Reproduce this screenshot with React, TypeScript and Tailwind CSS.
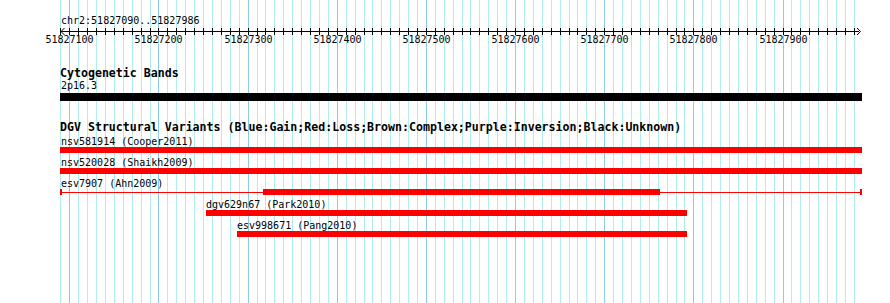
const START = 51827090;
const PX_PER_BP = 0.8915;
const ORIGIN = 60.4;

const bpToX = (bp: number) => Math.round(ORIGIN + (bp - START) * PX_PER_BP);

const gridLines = Array.from({ length: 90 }, (_, k) => ({
  x: Math.round(ORIGIN + k * 8.915) + 0.5,
  major: k % 10 === 1,
}));

const rulerLabels = [51827100, 51827200, 51827300, 51827400, 51827500, 51827600, 51827700, 51827800, 51827900];

interface Variant {
  name: string;
  labelX: number;
  start: number;
  end: number;
  // thick part for split features
  thickStart?: number;
  thickEnd?: number;
}

const VARIANTS: Variant[] = [
  { name: 'nsv581914 (Cooper2011)', labelX: 61, start: 60, end: 862 },
  { name: 'nsv520028 (Shaikh2009)', labelX: 61, start: 60, end: 862 },
  { name: 'esv7907 (Ahn2009)', labelX: 61, start: 60, end: 862, thickStart: 263, thickEnd: 660 },
  { name: 'dgv629n67 (Park2010)', labelX: 206, start: 206, end: 687 },
  { name: 'esv998671 (Pang2010)', labelX: 237, start: 237, end: 687 },
];

function Grid() {
  return (
    <svg className="absolute inset-0" width={890} height={303}>
      {gridLines.map((l) => (
        <line
          key={l.x}
          x1={l.x}
          x2={l.x}
          y1={0}
          y2={303}
          stroke={l.major ? '#8ccdee' : '#b0eeee'}
          strokeWidth={1}
        />
      ))}
    </svg>
  );
}

function Ruler() {
  return (
    <div className="relative h-[50px]">
      <div className="pt-[15px] pl-[61px] text-[10px] leading-[12px]">chr2:51827090..51827986</div>
      <svg className="absolute left-0 top-0" width={890} height={50}>
        <line x1={61} x2={859} y1={31.5} y2={31.5} stroke="#000" />
        {gridLines.map((l) => (
          <line key={l.x} x1={l.x} x2={l.x} y1={28} y2={35} stroke="#000" />
        ))}
        <polyline points="64.5,28 61,31.5 64.5,35" fill="none" stroke="#000" />
        <polyline points="857,28 860.5,31.5 857,35" fill="none" stroke="#000" />
      </svg>
      {rulerLabels.map((bp) => (
        <span
          key={bp}
          className="absolute top-[34px] -translate-x-1/2 text-[10px] leading-[12px]"
          style={{ left: bpToX(bp) + 0.5 }}
        >
          {bp}
        </span>
      ))}
    </div>
  );
}

function CytoBands() {
  return (
    <div className="pt-[17px] pl-[60px]">
      <div className="font-bold text-[11.6px] leading-[13px]">Cytogenetic Bands</div>
      <div className="pl-px text-[10px] leading-[12px]">2p16.3</div>
      <div className="mt-px h-[8px] w-[802px] bg-black" />
    </div>
  );
}

function VariantRow({ v }: { v: Variant }) {
  const split = v.thickStart !== undefined && v.thickEnd !== undefined;
  return (
    <div className="flex h-[21px] flex-col">
      <div className="text-[10px] leading-[11px] whitespace-nowrap" style={{ paddingLeft: v.labelX }}>
        {v.name}
      </div>
      {split ? (
        <div className="flex h-[6px] items-center" style={{ marginLeft: v.start, width: v.end - v.start }}>
          <div className="h-full w-[2px] bg-[#ff0000]" />
          <div className="h-px bg-[#ff0000]" style={{ width: v.thickStart! - v.start - 2 }} />
          <div className="h-full bg-[#ff0000]" style={{ width: v.thickEnd! - v.thickStart! }} />
          <div className="h-px flex-1 bg-[#ff0000]" />
          <div className="h-full w-[2px] bg-[#ff0000]" />
        </div>
      ) : (
        <div className="h-[6px] bg-[#ff0000]" style={{ marginLeft: v.start, width: v.end - v.start }} />
      )}
    </div>
  );
}

function StructuralVariants() {
  return (
    <div className="pt-[19px]">
      <div className="pl-[60px] font-bold text-[11.6px] leading-[14px] whitespace-nowrap">
        DGV Structural Variants (Blue:Gain;Red:Loss;Brown:Complex;Purple:Inversion;Black:Unknown)
      </div>
      <div className="flex flex-col pt-[2px]">
        {VARIANTS.map((v) => (
          <VariantRow key={v.name} v={v} />
        ))}
      </div>
    </div>
  );
}

export default function App() {
  return (
    <div className="relative w-[890px] h-[303px] overflow-hidden bg-white text-black font-['DejaVu_Sans_Mono',monospace]">
      <Grid />
      <div className="relative">
        <Ruler />
        <CytoBands />
        <StructuralVariants />
      </div>
    </div>
  );
}
